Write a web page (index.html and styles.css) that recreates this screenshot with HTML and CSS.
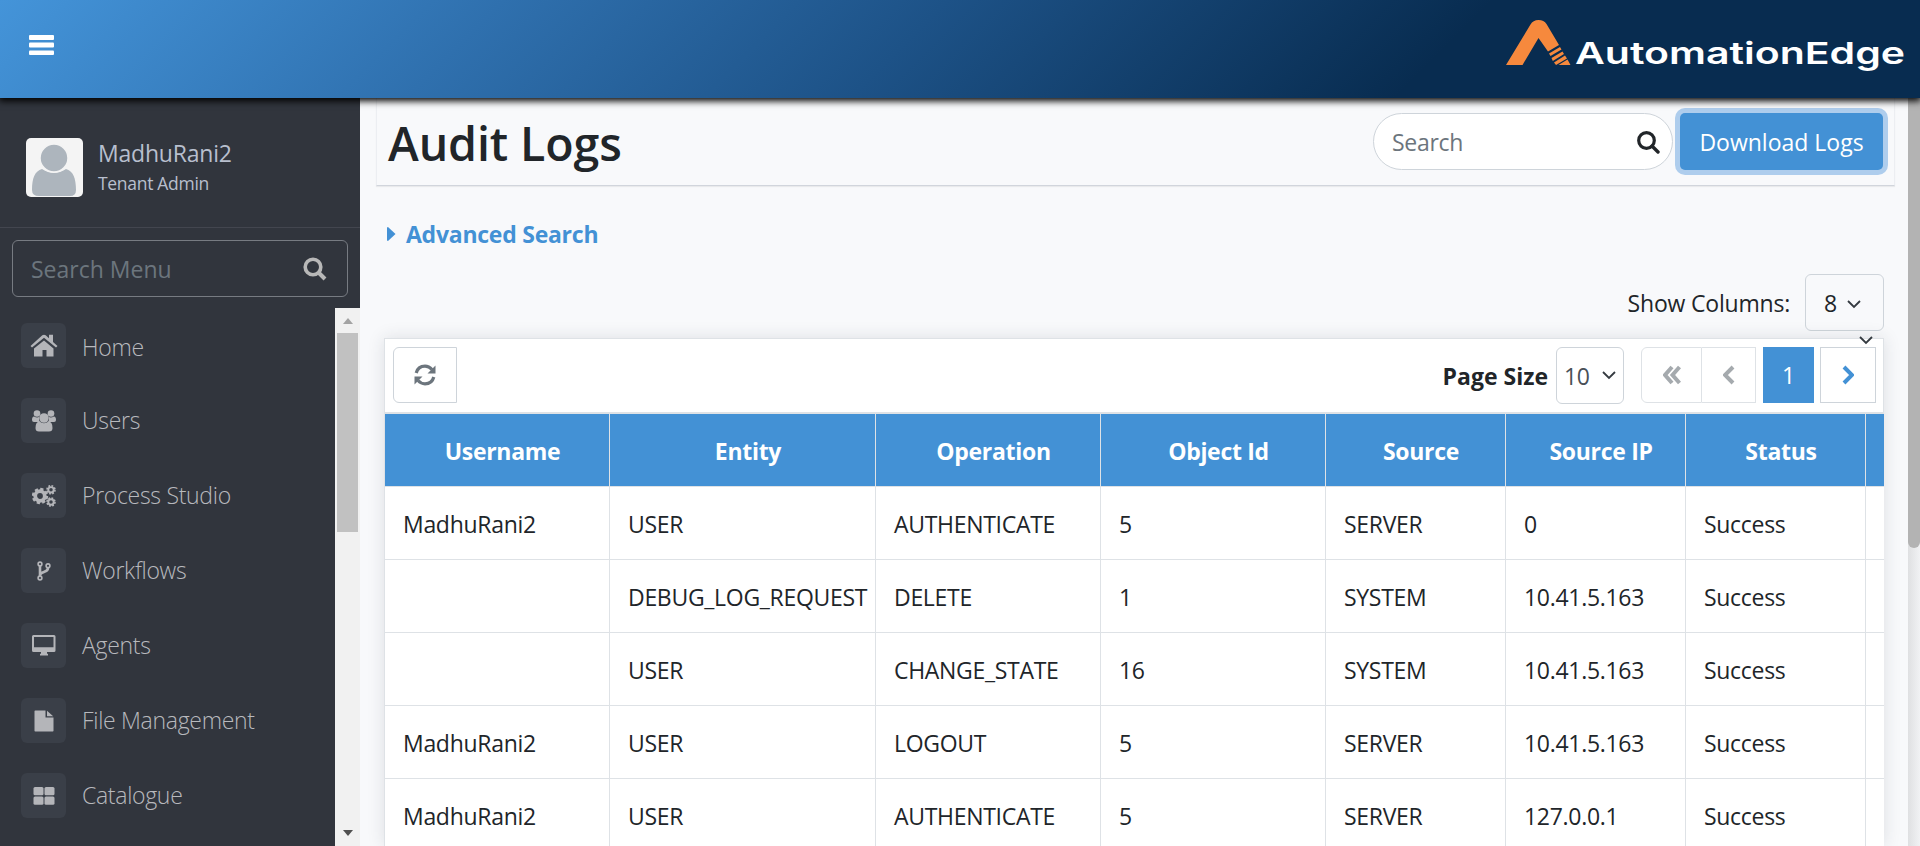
FILE: index.html
```html
<!DOCTYPE html>
<html lang="en">
<head>
<meta charset="utf-8">
<title>Audit Logs</title>
<link rel="stylesheet" href="styles.css">
</head>
<body>
<header class="topbar">
  <svg class="burger" viewBox="0 0 25 20" width="25" height="20"><g fill="#fff"><rect width="25" height="5" rx="1"/><rect y="7.6" width="25" height="5" rx="1"/><rect y="15.4" width="25" height="4.6" rx="1"/></g></svg>
  <div class="brand">
    <svg width="66" height="46" viewBox="0 0 66 46"><path fill="#f6893d" d="M0 45 L24.500 4.500 Q27 0 32.500 0 Q38 0 40.500 4 L53 25 L42 31.500 L32.500 18 L16.500 45Z M43 33.500 L54 27 L55.500 29.500 L44.500 36Z M45.500 38 L56.500 31.500 L58 34 L46.800 41Z M48 42.500 L59 35.500 L61 38.500 L50 45Z M52.500 45 L61.500 39.500 L64.500 45Z"/></svg>
    <span class="wordmark">AutomationEdge</span>
  </div>
</header>
<div class="body">
  <aside class="sidebar">
    <div class="profile">
      <svg width="57" height="59" viewBox="0 0 57 59"><rect width="57" height="59" rx="5" fill="#f4f4f4"/><path fill="#adb5bd" d="M6 52C6 40 9 33 16 31Q28 39 40 31C47 33 50 40 50 52Q50 58 44 58H13Q6 58 6 52Z"/><circle cx="28" cy="20" r="14" fill="#adb5bd" stroke="#f4f4f4" stroke-width="1.500"/></svg>
      <div class="who"><span class="name">MadhuRani2</span><span class="role">Tenant Admin</span></div>
    </div>
    <div class="menusearch"><span>Search Menu</span>
      <svg width="24" height="24" viewBox="0 0 24 24" fill="none" stroke="#b8b8b8"><circle cx="10" cy="10" r="7.800" stroke-width="3.600"/><path d="M16 16l6 6" stroke-width="4"/></svg>
    </div>
    <div class="menuwrap">
      <nav class="menu">
        <a class="home"><i><svg width="28" height="24" viewBox="0 0 28 24"><path d="M14 6.500L23.500 14.500V22.500H16.500V16H12.500V22.500H4V14.500Z"/><path d="M.500 12L12.300 1.300Q14 0 15.700 1.300L19 4.300V.800H23V8L27.500 12L26 13.500L14 3.800L2 13.500Z"/></svg></i><span>Home</span></a>
        <a><i><svg width="24" height="22" viewBox="0 0 24 22"><circle cx="5" cy="3.500" r="3.300"/><circle cx="19" cy="3.500" r="3.300"/><path d="M0 10Q0 6.500 2 6.500Q5 8 7 7Q6.500 10 8 12H2Q0 12 0 10ZM24 10Q24 6.500 22 6.500Q19 8 17 7Q17.500 10 16 12H22Q24 12 24 10Z"/><circle cx="12" cy="8" r="4.800"/><path d="M3.500 18Q3.500 11.500 7.500 11.500Q12 15 16.500 11.500Q20.500 11.500 20.500 18Q20.500 21.500 17 21.500H7Q3.500 21.500 3.500 18Z"/></svg></i><span>Users</span></a>
        <a><i><svg width="24" height="22" viewBox="0 0 24 22" fill="none" stroke="#b4b5b9"><circle cx="8" cy="11" r="4.800" stroke-width="3.800"/><circle cx="8" cy="11" r="7" stroke-width="2.400" stroke-dasharray="3.200 2.300"/><circle cx="19" cy="4.800" r="2.700" stroke-width="1.900"/><circle cx="19" cy="4.800" r="4" stroke-width="1.600" stroke-dasharray="1.800 1.340"/><circle cx="19" cy="17" r="2.700" stroke-width="1.900"/><circle cx="19" cy="17" r="4" stroke-width="1.600" stroke-dasharray="1.800 1.340"/></svg></i><span>Process Studio</span></a>
        <a><i><svg width="14" height="20" viewBox="0 0 14 20" fill="none" stroke="#b4b5b9"><g stroke-width="1.600"><circle cx="3" cy="3" r="1.900"/><circle cx="3" cy="17" r="1.900"/><circle cx="11" cy="4.800" r="1.900"/></g><path stroke-width="2.600" d="M3 5V15M11 7C11 12 4 10 3 14"/></svg></i><span>Workflows</span></a>
        <a><i><svg width="24" height="21" viewBox="0 0 24 21"><path fill-rule="evenodd" d="M1.500 0H22Q23.500 0 23.500 1.500V15.500Q23.500 17 22 17H15V18.500L16 19V20.500H8V19L9 18.500V17H1.500Q0 17 0 15.500V1.500Q0 0 1.500 0ZM2 2V12.300H21.500V2Z"/></svg></i><span>Agents</span></a>
        <a><i><svg width="20" height="22" viewBox="0 0 20 22"><path d="M.500 1.200Q.500.500 1.200.500H11.500V7.500H19.500V20.800Q19.500 21.500 18.800 21.500H1.200Q.500 21.500.500 20.800ZM13 .700L19.200 6.200H13Z"/></svg></i><span>File Management</span></a>
        <a><i><svg width="22" height="18" viewBox="0 0 22 18"><rect x=".500" width="10" height="8.300" rx="1.500"/><rect x="11.500" width="10" height="8.300" rx="1.500"/><rect x=".500" y="9.500" width="10" height="8.300" rx="1.500"/><rect x="11.500" y="9.500" width="10" height="8.300" rx="1.500"/></svg></i><span>Catalogue</span></a>
      </nav>
      <div class="sbar"><b class="up"></b><b class="thumb"></b><b class="down"></b></div>
    </div>
  </aside>
  <main class="main">
    <section class="titlebar">
      <h1>Audit Logs</h1>
      <div class="searchbox"><span>Search</span><svg width="23" height="23" viewBox="0 0 23 23" fill="none" stroke="#212529"><circle cx="9.500" cy="9.500" r="7.800" stroke-width="3.200"/><path d="M15 15l6 6" stroke-width="3.400" stroke-linecap="round"/></svg></div>
      <button class="download">Download Logs</button>
    </section>
    <div class="advanced"><svg width="9" height="14" viewBox="0 0 9 14"><path fill="#4391d5" d="M1 0L8.500 7L1 14Q0 14 0 13V1Q0 0 1 0Z"/></svg><span>Advanced Search</span></div>
    <div class="showcols"><span>Show Columns:</span><div class="select cols"><span>8</span><svg width="14" height="9" viewBox="0 0 14 9"><path d="M1 1l6 6 6-6"/></svg></div></div>
    <section class="card">
      <svg class="stray" width="14" height="9" viewBox="0 0 14 9"><path d="M1 1l6 6 6-6"/></svg>
      <div class="toolbar">
        <button class="refresh"><svg width="22" height="22" viewBox="0 0 22 22"><g fill="none" stroke="#6c757d" stroke-width="3.200"><path d="M2.200 9Q4 2.200 11 2.200Q15 2.200 18 5.500"/><path d="M19.800 13Q18 19.800 11 19.800Q7 19.800 4 16.500"/></g><path fill="#6c757d" d="M21.500 1.500V9.500H13.500ZM.500 20.500V12.500H8.500Z"/></svg></button>
        <strong>Page Size</strong>
        <div class="select size"><span>10</span><svg width="14" height="9" viewBox="0 0 14 9"><path d="M1 1l6 6 6-6"/></svg></div>
        <div class="pager">
          <span class="pg first"><svg width="18" height="20" viewBox="0 0 18 20"><path d="M9 2L2 10l7 8M16.500 2l-7 8 7 8"/></svg></span><span class="pg prev"><svg width="12" height="20" viewBox="0 0 12 20"><path d="M10 2L2 10l8 8"/></svg></span><span class="pg current">1</span><span class="pg next"><svg width="12" height="20" viewBox="0 0 12 20"><path d="M2 2l8 8-8 8"/></svg></span>
        </div>
      </div>
      <div class="grid">
        <div class="row head"><span>Username</span><span>Entity</span><span>Operation</span><span>Object Id</span><span>Source</span><span>Source IP</span><span>Status</span><span></span></div>
        <div class="row"><span>MadhuRani2</span><span>USER</span><span>AUTHENTICATE</span><span>5</span><span>SERVER</span><span>0</span><span>Success</span><span></span></div>
        <div class="row"><span></span><span>DEBUG_LOG_REQUEST</span><span>DELETE</span><span>1</span><span>SYSTEM</span><span>10.41.5.163</span><span>Success</span><span></span></div>
        <div class="row"><span></span><span>USER</span><span>CHANGE_STATE</span><span>16</span><span>SYSTEM</span><span>10.41.5.163</span><span>Success</span><span></span></div>
        <div class="row"><span>MadhuRani2</span><span>USER</span><span>LOGOUT</span><span>5</span><span>SERVER</span><span>10.41.5.163</span><span>Success</span><span></span></div>
        <div class="row"><span>MadhuRani2</span><span>USER</span><span>AUTHENTICATE</span><span>5</span><span>SERVER</span><span>127.0.0.1</span><span>Success</span><span></span></div>
      </div>
    </section>
  </main>
  <div class="pagebar"><b></b></div>
</div>
</body>
</html>
```
FILE: styles.css
```css
* { box-sizing: border-box; }
body { margin: 0; height: 846px; overflow: hidden; display: flex; flex-direction: column; font-family: "Open Sans", "Noto Sans", sans-serif; font-size: 23px; line-height: 36px; letter-spacing: -0.3px; color: #212529; background: #f8f9fb; }
svg { display: block; flex: none; }
button { font: inherit; letter-spacing: inherit; padding: 0; }
.topbar { height: 98px; flex: none; display: flex; justify-content: space-between; padding: 0 14px 0 29px; background: linear-gradient(135deg, #4494d9 0%, #2f70ae 25%, #1d5287 47%, #082c50 74%, #082c50 100%); box-shadow: 0 2px 7px 1px #000; position: relative; z-index: 2; }
.burger { margin-top: 35px; }
.brand { display: flex; padding-top: 20px; }
.wordmark { width: 240px; color: #fff; font: 600 30px/40px Inter, sans-serif; letter-spacing: 0; margin: 13px 91px 0 3px; transform: scaleX(1.367); transform-origin: left; }
.body { flex: 1; display: flex; min-height: 0; }
.sidebar { width: 360px; flex: none; background: #31353d; display: flex; flex-direction: column; }
.profile { height: 130px; display: flex; padding: 40px 0 0 26px; border-bottom: 1px solid #43464f; }
.who { display: flex; flex-direction: column; margin: -1px 0 0 15px; color: #b8bfce; }
.name { line-height: 32px; letter-spacing: -0.2px; }
.role { font-size: 17.500px; line-height: 28px; letter-spacing: -0.3px; }
.menusearch { margin: 12px 12px 11px; height: 57px; border: 1px solid #777b82; border-radius: 6px; display: flex; align-items: center; justify-content: space-between; padding: 1px 20px 0 18px; color: #6c757d; letter-spacing: 0; }
.menuwrap { flex: 1; display: flex; min-height: 0; }
.menu { flex: 1; padding: 0 21px; display: flex; flex-direction: column; overflow: hidden; }
.menu a { height: 75px; flex: none; display: flex; align-items: center; gap: 16px; font-weight: 300; letter-spacing: -0.3px; color: #b8b9bd; }
.menu span { padding-bottom: 2px; }
.menu .home span { padding: 2px 0 0; }
.menu i { width: 45px; height: 45px; border-radius: 6px; background: #3a3f48; display: flex; align-items: center; justify-content: center; fill: #b4b5b9; }
.sbar { width: 25px; background: #f1f1f1; display: flex; flex-direction: column; align-items: center; }
.up { border: 5.500px solid transparent; border-top: 0; border-bottom: 6px solid #a3a3a3; margin: 10px 0 9px; }
.thumb { width: 21px; height: 199px; background: #c1c1c1; }
.down { border: 5.500px solid transparent; border-bottom: 0; border-top: 6px solid #505050; margin: auto 0 10px; }
.main { flex: 1; min-width: 0; padding: 0 13px 0 16px; display: flex; flex-direction: column; overflow: hidden; }
.titlebar { height: 88px; flex: none; display: flex; align-items: flex-start; padding: 15px 11px 0 12px; border: 1px solid #eceef2; border-top: 0; border-bottom: 1px solid #d1d5dc; box-shadow: 0 1px 1px rgba(0,0,0,.06); }
h1 { margin: -1px 0 0 -1px; font-size: 46.500px; line-height: 62px; font-weight: 600; letter-spacing: -0.1px; }
.searchbox { margin-left: auto; width: 300px; height: 57px; border: 1px solid #ced4da; border-radius: 29px; background: #fff; display: flex; justify-content: space-between; align-items: center; padding: 1px 12px 0 18px; color: #6c757d; }
.download { width: 203px; height: 57px; margin-left: 7px; background: #4391d5; color: #fff; border: 0; border-radius: 5px; box-shadow: 0 0 0 5px #aecded; letter-spacing: 0; }
.advanced { flex: none; display: flex; align-items: center; gap: 10px; margin: 30px 0 0 11px; height: 36px; color: #4391d5; font-weight: 700; letter-spacing: -0.25px; }
.showcols { flex: none; display: flex; justify-content: flex-end; align-items: center; gap: 15px; margin: 22px 11px 7px 0; letter-spacing: -0.2px; }
.select { height: 57px; border: 1px solid #ced4da; border-radius: 6px; display: flex; align-items: center; justify-content: space-between; }
.select path, .stray path { fill: none; stroke: #343a40; stroke-width: 1.800; }
.cols { width: 79px; padding: 0 22px 0 18px; }
.cols svg { margin-top: 3px; }
.card { flex: 1; min-height: 0; position: relative; margin: 0 11px 0 8px; background: #fff; border: 1px solid #dee2e6; border-right-width: 0; border-bottom: 0; box-shadow: 0 0 16px rgba(40,50,60,.13); display: flex; flex-direction: column; }
.stray { position: absolute; right: 11px; top: -3px; }
.toolbar { height: 75px; flex: none; display: flex; align-items: flex-start; padding: 8px 7px 0 8px; border-right: 1px solid #dee2e6; border-bottom: 2px solid #dee2e6; }
.refresh { width: 64px; height: 56px; border: 1px solid #ced4da; border-radius: 6px 0 0 6px; background: #fff; display: flex; align-items: center; justify-content: center; }
.toolbar strong { margin: 11px 8px 0 auto; letter-spacing: 0; }
.size { width: 68px; padding: 0 7px; color: #495057; }
.pager { display: flex; margin-left: 17px; }
.pg { height: 56px; display: flex; align-items: center; justify-content: center; border: 1px solid #dee2e6; }
.pg path { fill: none; stroke: #a5aaae; stroke-width: 4; }
.first { width: 61px; border-radius: 6px 0 0 6px; }
.prev { width: 54px; border-left: 0; }
.current { width: 51px; margin: 0 6px 0 7px; background: #4391d5; border-color: #4391d5; color: #fff; }
.next { width: 56px; border-color: #ced4da; }
.next path { stroke: #4391d5; }
.grid { flex: 1; min-height: 0; overflow: hidden; }
.row { display: grid; grid-template-columns: 225px 266px 225px 225px 180px 180px 180px 1fr; height: 73px; white-space: nowrap; }
.row span { border-right: 1px solid #dee2e6; border-bottom: 1px solid #dee2e6; padding: 19px 0 0 18px; }
.row span:last-child { border-right: 0; padding: 0; }
.head { background: #4391d5; color: #fff; font-weight: 700; text-align: center; letter-spacing: -0.3px; }
.row.head span { padding-left: 11px; }
.pagebar { width: 12px; background: linear-gradient(90deg, #dfe0e2, #f1f2f4); }
.pagebar b { display: block; height: 450px; background: #b3b3b3; border-radius: 0 0 6px 6px; }
```
